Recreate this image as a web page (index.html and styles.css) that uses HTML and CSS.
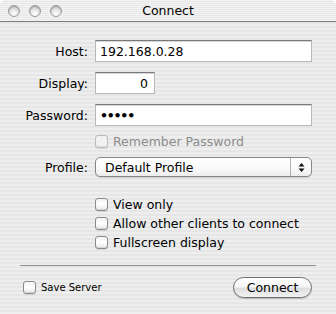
FILE: index.html
```html
<!DOCTYPE html>
<html>
<head>
<meta charset="utf-8">
<link rel="stylesheet" href="styles.css">
</head>
<body>
<div class="window">
  <div class="titlebar">
    <div class="lights">
      <span class="light"></span><span class="light"></span><span class="light"></span>
    </div>
    <div class="title">Connect</div>
  </div>
  <div class="content">
    <div class="row row-host">
      <label class="label">Host:</label>
      <div class="field field-wide">192.168.0.28</div>
    </div>
    <div class="row row-display">
      <label class="label">Display:</label>
      <div class="field field-short">0</div>
    </div>
    <div class="row row-pass">
      <label class="label">Password:</label>
      <div class="field field-wide dots">•••••</div>
    </div>
    <div class="row row-remember">
      <span class="label"></span>
      <span class="check disabled"></span><span class="check-text disabled-text">Remember Password</span>
    </div>
    <div class="row row-profile">
      <label class="label">Profile:</label>
      <div class="popup">
        <span class="popup-text">Default Profile</span>
        <span class="popup-arrows">
          <svg width="7" height="11" viewBox="0 0 7 11"><path d="M3.5 1 L6.5 4.5 L0.5 4.5 Z" fill="#111"/><path d="M3.5 10 L6.5 6.5 L0.5 6.5 Z" fill="#111"/></svg>
        </span>
      </div>
    </div>
    <div class="options">
      <div class="opt"><span class="check"></span><span class="check-text">View only</span></div>
      <div class="opt"><span class="check"></span><span class="check-text">Allow other clients to connect</span></div>
      <div class="opt"><span class="check"></span><span class="check-text">Fullscreen display</span></div>
    </div>
    <div class="separator"></div>
    <div class="bottom">
      <div class="save"><span class="check small"></span><span class="save-text">Save Server</span></div>
      <button class="btn">Connect</button>
    </div>
  </div>
</div>
</body>
</html>
```

FILE: styles.css
```css
html, body {
  margin: 0;
  padding: 0;
}
body {
  width: 336px;
  height: 314px;
  overflow: hidden;
  font-family: "DejaVu Sans", "Lucida Grande", sans-serif;
  font-size: 12.5px;
  color: #000;
}
.window {
  width: 336px;
  height: 314px;
  background: repeating-linear-gradient(to bottom, #eeeeee 0px, #eeeeee 2px, #e6e6e6 2px, #e6e6e6 4px);
  border-radius: 6px 6px 0 0;
  overflow: hidden;
}
.titlebar {
  height: 21px;
  border-bottom: 1px solid #7b7b7b;
  display: flex;
  align-items: center;
  position: relative;
  background: repeating-linear-gradient(to bottom, #f2f2f2 0px, #f2f2f2 1px, #e9e9e9 1px, #e9e9e9 2px);
}
.lights {
  display: flex;
  gap: 8px;
  padding-left: 8px;
}
.light {
  width: 12px;
  height: 12px;
  box-sizing: border-box;
  border-radius: 50%;
  border: 1px solid #9c9c9c;
  background: radial-gradient(circle at 50% 78%, #ffffff 0%, #ececec 35%, #c8c8c8 80%, #b8b8b8 100%);
  box-shadow: inset 0 1px 1px rgba(0,0,0,0.18);
}
.light + .light {
  margin-left: 1px;
}
.title {
  position: absolute;
  left: 0;
  right: 0;
  text-align: center;
  top: 3px;
  font-size: 12.5px;
}
.content {
  display: flex;
  flex-direction: column;
}
.row {
  display: flex;
  align-items: center;
}
.label {
  width: 88px;
  text-align: right;
  margin-right: 7px;
  flex: none;
}
.row-host { margin-top: 18px; }
.row-display { margin-top: 10px; }
.row-pass { margin-top: 10px; }
.row-remember { margin-top: 8px; height: 14px; }
.row-profile { margin-top: 9px; }
.field {
  height: 22px;
  box-sizing: border-box;
  background: #fff;
  border: 1px solid #b8b8b8;
  border-top: 1px solid #7a7a7a;
  box-shadow: inset 0 1px 0 #d6d6d6;
  padding: 3px 0 0 4px;
  line-height: 15px;
}
.field-wide { width: 217px; }
.field-short {
  width: 60px;
  text-align: right;
  padding-right: 6px;
}
.dots {
  letter-spacing: -1.2px;
  font-size: 12.5px;
  font-weight: bold;
}
.check {
  width: 13px;
  height: 13px;
  box-sizing: border-box;
  border: 1px solid #8a8a8a;
  border-radius: 3px;
  background: linear-gradient(to bottom, #f4f4f4 0%, #ffffff 50%, #e6e6e6 100%);
  box-shadow: 0 1px 0 rgba(0,0,0,0.08), inset 0 -1px 1px rgba(0,0,0,0.08);
  flex: none;
}
.check.disabled {
  border-color: #bcbcbc;
  background: #f2f2f2;
}
.check-text {
  margin-left: 5px;
  white-space: nowrap;
}
.disabled-text {
  color: #8c8c8c;
}
.popup {
  width: 217px;
  height: 20px;
  box-sizing: border-box;
  border: 1px solid #858585;
  border-radius: 5px;
  background: linear-gradient(to bottom, #ffffff 0%, #fafafa 60%, #ececec 100%);
  box-shadow: 0 1px 1px rgba(0,0,0,0.12);
  display: flex;
  align-items: center;
}
.popup-text {
  flex: 1;
  padding-left: 9px;
}
.popup-arrows {
  width: 20px;
  height: 100%;
  border-left: 1px solid #b0b0b0;
  display: flex;
  align-items: center;
  justify-content: center;
}
.options {
  display: flex;
  flex-direction: column;
  gap: 5px;
  margin-top: 20px;
  padding-left: 95px;
}
.opt {
  display: flex;
  align-items: center;
  height: 14px;
}
.separator {
  margin: 16px 20px 0 20px;
  height: 1px;
  background: #8f8f8f;
}
.bottom {
  margin-top: 11px;
  display: flex;
  align-items: center;
  justify-content: space-between;
  padding: 0 24px 0 23px;
}
.save {
  display: flex;
  align-items: center;
}
.save-text {
  margin-left: 5px;
  font-size: 10px;
}
.btn {
  width: 79px;
  height: 21px;
  border: 1px solid #6f6f6f;
  border-radius: 11px;
  background: linear-gradient(to bottom, #ffffff 0%, #f6f6f6 45%, #dedede 55%, #f2f2f2 100%);
  box-shadow: 0 1px 1px rgba(0,0,0,0.2);
  font-family: "DejaVu Sans", sans-serif;
  font-size: 12.5px;
  color: #000;
  padding: 0;
  line-height: 18px;
}
```
